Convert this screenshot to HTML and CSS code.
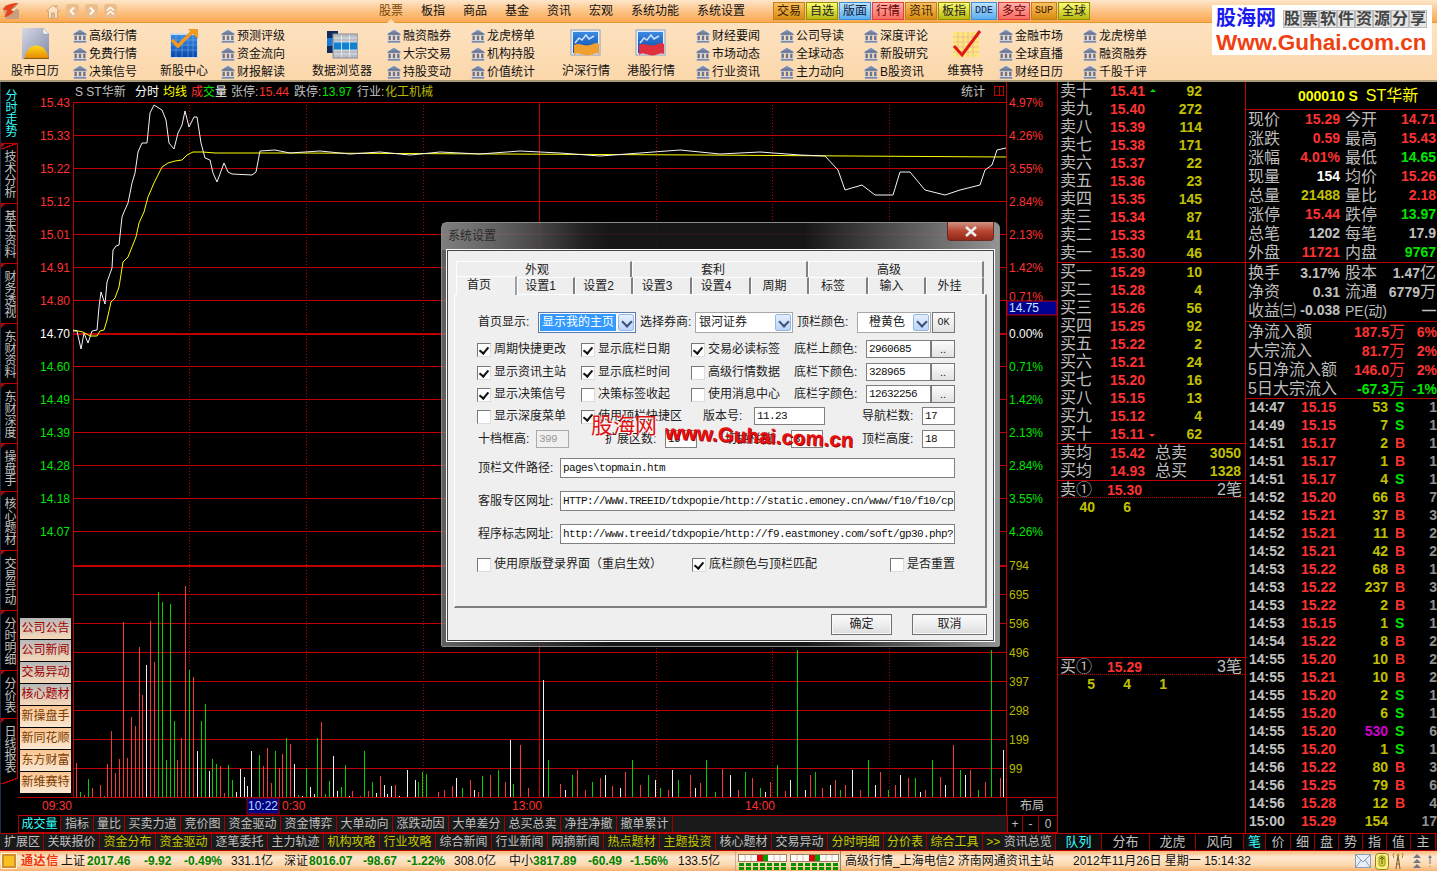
FILE: index.html
```html
<!DOCTYPE html>
<html lang="zh-CN">
<head>
<meta charset="utf-8">
<title>通达信</title>
<link rel="stylesheet" href="styles.css">
</head>
<body>
<svg class="defs" width="0" height="0" aria-hidden="true">
  <defs>
    <linearGradient id="bankg" x1="0" y1="0" x2="0" y2="1"><stop offset="0" stop-color="#98a6c2"/><stop offset="1" stop-color="#5a6886"/></linearGradient>
    <linearGradient id="pageg" x1="0" y1="0" x2="1" y2="1"><stop offset="0" stop-color="#d8d8e4"/><stop offset="1" stop-color="#7f8aa8"/></linearGradient>
    <linearGradient id="sung" x1="0" y1="0" x2="0" y2="1"><stop offset="0" stop-color="#ffd820"/><stop offset="1" stop-color="#e88a00"/></linearGradient>
    <linearGradient id="blueg" x1="0" y1="0" x2="0" y2="1"><stop offset="0" stop-color="#3a8ae0"/><stop offset="1" stop-color="#0a48a8"/></linearGradient>
    <symbol id="bank" viewBox="0 0 14 14">
      <path d="M7 .2 13.8 4.800V6.200H.2V4.800Z" fill="url(#bankg)" stroke="#f4f6fc" stroke-width=".5"/>
      <path d="M1.500 6.800h2.400v4.400H1.500zM5.800 6.800h2.400v4.400H5.800zM10.100 6.800h2.400v4.400h-2.400z" fill="#66759a"/>
      <path d="M.5 11.500h13V13.800H.5z" fill="url(#bankg)" stroke="#f4f6fc" stroke-width=".4"/>
    </symbol>
    <symbol id="flag" viewBox="0 0 32 32">
      <rect x="1" y="3" width="29" height="25" fill="#e8eef8" stroke="#8ca0c0"/>
      <rect x="3" y="5" width="25" height="21" fill="url(#blueg)"/>
      <path d="M5 16 9 11 12 13 16 8 19 12 24 9" fill="none" stroke="#cfe4ff" stroke-width="1.500"/>
    </symbol>
  </defs>
</svg>

<div class="app">
  <header class="titlebar">
    <svg class="logo" width="18" height="18" viewBox="0 0 18 18"><path d="M1 6 4 3 17 1 13 6 17 8 17 17 4 17Z" fill="#c8a080"/><path d="M1 8C3 3 9 1 16 1 12 4 10 6 9 8L12 9C9 13 5 15 2 15 4 12 5 10 5 8Z" fill="#e8421a"/><path d="M9 8 15 5 12 9Z" fill="#fff2c0"/></svg>
    <svg class="home" width="14" height="15" viewBox="0 0 14 15"><path d="M7 1 .5 7H2.500V14H11.500V7H13.500L11 4.700V1.500H9.500V3.300Z" fill="#fbe3c4" stroke="#cfa57c"/><path d="M5.500 14V9H8.500V14" fill="#e4bd94" stroke="#cfa57c"/></svg>
    <span class="navbtn first"><svg width="13" height="14" viewBox="0 0 13 14"><path d="M8 3.500 4.500 7 8 10.500" fill="none" stroke="#fff" stroke-width="1.800"/></svg></span>
    <span class="navbtn"><svg width="13" height="14" viewBox="0 0 13 14"><path d="M5 3.500 8.500 7 5 10.500" fill="none" stroke="#fff" stroke-width="1.800"/></svg></span>
    <span class="navbtn"><svg width="13" height="14" viewBox="0 0 13 14"><path d="M3 6.500 6.500 3.500 10 6.500M3 10.500 6.500 7.500 10 10.500" fill="none" stroke="#fff" stroke-width="1.500"/></svg></span>
    <nav class="menu">
      <span class="cur">股票</span><span>板指</span><span>商品</span><span>基金</span><span>资讯</span><span>宏观</span><span>系统功能</span><span>系统设置</span>
    </nav>
    <div class="quick">
      <span class="qb orange">交易</span><span class="qb yellow">自选</span><span class="qb blue">版面</span><span class="qb pink">行情</span><span class="qb orange">资讯</span><span class="qb yellow">板指</span><span class="qb blue narrow mono">DDE</span><span class="qb pink">多空</span><span class="qb orange narrow mono">SUP</span><span class="qb yellow">全球</span>
    </div>
  </header>

  <section class="toolbar">
    <div class="big">
      <svg width="32" height="32" viewBox="0 0 32 32"><path d="M3 1H24L30 7V32H3Z" fill="url(#pageg)"/><path d="M24 1V7H30Z" fill="#f4f4f8" stroke="#9aa" stroke-width=".5"/><path d="M6 31A11.500 12.500 0 0 1 29 31Z" fill="url(#sung)"/><path d="M5 31H30V32H5Z" fill="#8a5a10"/></svg>
      <span>股市日历</span>
    </div>
    <div class="col">
      <div class="ti"><svg class="bk"><use href="#bank"/></svg>高级行情</div>
      <div class="ti"><svg class="bk"><use href="#bank"/></svg>免费行情</div>
      <div class="ti"><svg class="bk"><use href="#bank"/></svg>决策信号</div>
    </div>
    <div class="big">
      <svg width="32" height="32" viewBox="0 0 32 32"><rect x="2" y="6" width="28" height="25" fill="#cfd8e8"/><rect x="3" y="8" width="26" height="22" fill="url(#blueg)"/><path d="M3 13H29M3 18H29M3 23H29M8 8V30M14 8V30M20 8V30M25 8V30" stroke="#6fa8f0" stroke-width=".6"/><path d="M4 13 10 19 24 5" fill="none" stroke="#f09a20" stroke-width="3.500"/><path d="M20 2H30V12Z" fill="#f09a20"/></svg>
      <span>新股中心</span>
    </div>
    <div class="col">
      <div class="ti"><svg class="bk"><use href="#bank"/></svg>预测评级</div>
      <div class="ti"><svg class="bk"><use href="#bank"/></svg>资金流向</div>
      <div class="ti"><svg class="bk"><use href="#bank"/></svg>财报解读</div>
    </div>
    <div class="big pad15">
      <svg width="32" height="32" viewBox="0 0 32 32"><rect x="1" y="4" width="11" height="22" fill="#102a60"/><rect x="1" y="11" width="11" height="8" fill="#1a78d0"/><rect x="7" y="7" width="25" height="24" fill="#b8bcc4" stroke="#8c8c90"/><rect x="8" y="15" width="23" height="8" fill="#1080d0"/><path d="M8 15H31M8 23H31M15.500 8V30M23.500 8V30M8 11H31M8 27H31" stroke="#e8ecf0" stroke-width=".8"/></svg>
      <span>数据浏览器</span>
    </div>
    <div class="col">
      <div class="ti"><svg class="bk"><use href="#bank"/></svg>融资融券</div>
      <div class="ti"><svg class="bk"><use href="#bank"/></svg>大宗交易</div>
      <div class="ti"><svg class="bk"><use href="#bank"/></svg>持股变动</div>
    </div>
    <div class="col">
      <div class="ti"><svg class="bk"><use href="#bank"/></svg>龙虎榜单</div>
      <div class="ti"><svg class="bk"><use href="#bank"/></svg>机构持股</div>
      <div class="ti"><svg class="bk"><use href="#bank"/></svg>价值统计</div>
    </div>
    <div class="big">
      <svg width="32" height="32" viewBox="0 0 32 32"><use href="#flag"/><path d="M4 18C10 15 14 20 20 18S26 15 29 17V27C24 25 20 30 14 28S6 26 4 28Z" fill="#f0a030"/></svg>
      <span>沪深行情</span>
    </div>
    <div class="big pad13">
      <svg width="32" height="32" viewBox="0 0 32 32"><use href="#flag"/><path d="M4 18C10 15 14 20 20 18S26 15 29 17V27C24 25 20 30 14 28S6 26 4 28Z" fill="#e03040"/></svg>
      <span>港股行情</span>
    </div>
    <div class="col">
      <div class="ti"><svg class="bk"><use href="#bank"/></svg>财经要闻</div>
      <div class="ti"><svg class="bk"><use href="#bank"/></svg>市场动态</div>
      <div class="ti"><svg class="bk"><use href="#bank"/></svg>行业资讯</div>
    </div>
    <div class="col">
      <div class="ti"><svg class="bk"><use href="#bank"/></svg>公司导读</div>
      <div class="ti"><svg class="bk"><use href="#bank"/></svg>全球动态</div>
      <div class="ti"><svg class="bk"><use href="#bank"/></svg>主力动向</div>
    </div>
    <div class="col">
      <div class="ti"><svg class="bk"><use href="#bank"/></svg>深度评论</div>
      <div class="ti"><svg class="bk"><use href="#bank"/></svg>新股研究</div>
      <div class="ti"><svg class="bk"><use href="#bank"/></svg>B股资讯</div>
    </div>
    <div class="big">
      <svg width="32" height="32" viewBox="0 0 32 32"><rect x="3" y="5" width="26" height="25" fill="#fbe878"/><path d="M3 10H29M3 15H29M3 20H29M3 25H29M8 5V30M13 5V30M18 5V30M23 5V30" stroke="#f0a8a0" stroke-width=".7"/><path d="M4 19 12 28 30 4" fill="none" stroke="#e01818" stroke-width="3"/></svg>
      <span>维赛特</span>
    </div>
    <div class="col">
      <div class="ti"><svg class="bk"><use href="#bank"/></svg>金融市场</div>
      <div class="ti"><svg class="bk"><use href="#bank"/></svg>全球直播</div>
      <div class="ti"><svg class="bk"><use href="#bank"/></svg>财经日历</div>
    </div>
    <div class="col">
      <div class="ti"><svg class="bk"><use href="#bank"/></svg>龙虎榜单</div>
      <div class="ti"><svg class="bk"><use href="#bank"/></svg>融资融券</div>
      <div class="ti"><svg class="bk"><use href="#bank"/></svg>千股千评</div>
    </div>
  </section>

  <main class="main">
    <aside class="sidetabs">
      <div class="st active h61">分时走势</div>
      <div class="st h60">技术分析</div>
      <div class="st h60">基本资料</div>
      <div class="st h60">财务透视</div>
      <div class="st h60">东财资料</div>
      <div class="st h60">东财深度</div>
      <div class="st h48">操盘手</div>
      <div class="st h59">核心题材</div>
      <div class="st h60">交易异动</div>
      <div class="st h60">分时明细</div>
      <div class="st h48">分价表</div>
      <div class="st h60 last">日线报表</div>
    </aside>

    <div class="chartcol">
      <svg class="chart" viewBox="18 82 1039 733" width="1039" height="733">
        <g class="grid">
          <path d="M73 102.500H1007M73 135.500H1007M73 168.500H1007M73 201.500H1007M73 234.500H1007M73 267.500H1007M73 300.500H1007M73 366.500H1007M73 399.500H1007M73 432.500H1007M73 465.500H1007M73 498.500H1007M73 531.500H1007M73 594.500H1007M73 623.500H1007M73 652.500H1007M73 681.500H1007M73 710.500H1007M73 739.500H1007M73 768.500H1007M18 797.500H1057"/>
          <path class="thick" d="M73 334H1007M73 566H1007"/>
          <path class="dot" d="M189.500 102V797M306.500 102V797M423.500 102V797M656.500 102V797M772.500 102V797M889.500 102V797"/>
          <path d="M73.500 102V797M539.500 102V797M1006.500 82V815M1007 797.500H1057"/>
        </g>
        <path class="vr" d="M76 763V797M84 795V797M92 788V797M100 785V797M107 764V797M111 731V797M115 773V797M119 759V797M123 622V797M127 758V797M131 717V797M135 726V797M139 647V797M142 695V797M150 621V797M154 662V797M177 760V797M181 738V797M185 586V797M193 677V797M220 766V797M224 793V797M263 766V797M267 748V797M271 783V797M279 768V797M282 754V797M290 744V797M321 722V797M352 791V797M360 796V797M368 791V797M380 776V797M395 785V797M438 792V797M444 790V797M452 786V797M470 780V797M478 792V797M490 775V797M505 782V797M520 745V797M528 788V797M560 784V797M577 770V797M585 790V797M600 778V797M612 786V797M625 772V797M640 785V797M668 790V797M690 775V797M700 783V797M722 769V797M738 790V797M752 778V797M770 782V797M785 791V797M810 775V797M822 788V797M835 780V797M845 785V797M860 790V797M880 772V797M895 785V797M908 778V797M925 790V797M940 777V797M953 745V797M970 770V797M985 782V797M1000 778V797"/>
        <path class="vg" d="M80 792V797M88 779V797M104 796V797M158 592V797M162 602V797M166 760V797M170 604V797M174 721V797M189 670V797M201 721V797M205 704V797M212 759V797M216 764V797M228 765V797M232 780V797M259 755V797M275 751V797M286 738V797M298 795V797M306 768V797M317 738V797M325 794V797M329 781V797M341 787V797M345 765V797M364 751V797M372 782V797M418 782V797M422 772V797M426 774V797M462 788V797M482 776V797M498 770V797M513 784V797M548 760V797M572 775V797M592 782V797M632 760V797M648 775V797M660 788V797M678 780V797M706 760V797M715 792V797M745 772V797M760 788V797M777 765V797M797 650V797M815 772V797M840 790V797M868 760V797M888 790V797M915 778V797M932 760V797M960 770V797M978 790V797M991 650V797"/>
        <path class="vw" d="M146 665V797M197 751V797M209 771V797M236 792V797M240 769V797M244 777V797M247 786V797M251 751V797M294 764V797M302 796V797M310 787V797M314 794V797M333 756V797M337 791V797M349 796V797M376 793V797M384 785V797M387 794V797M391 786V797M399 796V797M407 770V797M415 780V797M456 778V797M474 790V797M510 740V797M543 680V797M565 790V797M605 775V797M620 788V797M655 780V797M672 770V797M695 788V797M730 775V797M765 792V797M790 780V797M805 790V797M830 785V797M852 770V797M875 785V797M900 775V797M920 792V797M945 785V797M965 775V797M1003 750V797"/>
        <polyline class="avg" points="73,330 83,332 90,336 97,336 100,331 104,330 107,320 111,302 115,298 119,287 123,262 128,257 132,247 136,237 139,223 144,212 148,197 154,183 162,167 168,163 175,161 182,160 187,155 193,152 203,152 215,153 300,153 500,154 700,155 850,156 1006,157"/>
        <polyline class="price" points="73,331 77,331 81,349 84,333 88,343 92,331 97,330 99,307 101,292 105,304 107,282 112,268 113,250 116,246 119,245 122,217 124,212 128,203 132,183 135,173 138,152 142,143 147,143 150,113 154,105 162,110 166,120 169,143 174,149 178,133 182,125 185,111 189,127 194,117 197,117 201,143 205,158 210,160 213,173 217,182 224,163 228,172 232,174 252,175 256,172 260,151 275,150 290,153 320,151 350,154 380,152 410,155 440,152 480,154 520,151 560,153 600,156 640,153 680,150 720,154 760,152 800,155 825,156 838,170 845,190 862,185 875,195 893,195 900,172 910,172 925,190 945,195 960,190 980,185 985,170 992,165 997,150 1006,148"/>

        <g class="tx">
          <text x="75" y="96" class="gray">S ST华新</text>
          <text x="135" y="96" class="white">分时</text>
          <text x="163" y="96" class="yel">均线</text>
          <text x="191" y="96" class="red">成</text><text x="203" y="96" class="grn">交</text><text x="215" y="96" class="white">量</text>
          <text x="231" y="96" class="gray">张停:</text><text x="259" y="96" class="red">15.44</text>
          <text x="294" y="96" class="gray">跌停:</text><text x="322" y="96" class="grn">13.97</text>
          <text x="357" y="96" class="gray">行业:</text><text x="385" y="96" class="oli">化工机械</text>
          <text x="961" y="96" class="gray">统计</text>

          <g class="right">
            <text x="70" y="107" class="red">15.43</text><text x="70" y="140" class="red">15.33</text><text x="70" y="173" class="red">15.22</text><text x="70" y="206" class="red">15.12</text><text x="70" y="239" class="red">15.01</text><text x="70" y="272" class="red">14.91</text><text x="70" y="305" class="red">14.80</text>
            <text x="70" y="338" class="white">14.70</text>
            <text x="70" y="371" class="grn">14.60</text><text x="70" y="404" class="grn">14.49</text><text x="70" y="437" class="grn">14.39</text><text x="70" y="470" class="grn">14.28</text><text x="70" y="503" class="grn">14.18</text><text x="70" y="536" class="grn">14.07</text>
          </g>
          <text x="1009" y="107" class="red">4.97%</text><text x="1009" y="140" class="red">4.26%</text><text x="1009" y="173" class="red">3.55%</text><text x="1009" y="206" class="red">2.84%</text><text x="1009" y="239" class="red">2.13%</text><text x="1009" y="272" class="red">1.42%</text><text x="1009" y="301" class="red">0.71%</text>
          <text x="1009" y="338" class="white">0.00%</text>
          <text x="1009" y="371" class="grn">0.71%</text><text x="1009" y="404" class="grn">1.42%</text><text x="1009" y="437" class="grn">2.13%</text><text x="1009" y="470" class="grn">2.84%</text><text x="1009" y="503" class="grn">3.55%</text><text x="1009" y="536" class="grn">4.26%</text>
          <text x="1009" y="570" class="oli">794</text><text x="1009" y="599" class="oli">695</text><text x="1009" y="628" class="oli">596</text><text x="1009" y="657" class="oli">496</text><text x="1009" y="686" class="oli">397</text><text x="1009" y="715" class="oli">298</text><text x="1009" y="744" class="oli">199</text><text x="1009" y="773" class="oli">99</text>

          <text x="42" y="810" class="red">09:30</text><text x="282" y="810" class="red">0:30</text><text x="512" y="810" class="red">13:00</text><text x="745" y="810" class="red">14:00</text>
          <text x="1020" y="810" class="gray">布局</text>
        </g>
        <rect class="mark" x="994.500" y="86.500" width="9" height="9"/>
        <path class="markl" d="M999 87V95"/>
        <rect class="hl" x="1007" y="301" width="50" height="14"/>
        <text x="1009" y="312" class="tx hlt">14.75</text>
        <rect class="tb" x="247" y="798" width="32" height="16"/>
        <text x="248" y="810" class="tx tbt">10:22</text>
      </svg>

      <div class="floatbtns">
        <span class="fb gr">公司公告</span><span class="fb gr">公司新闻</span><span class="fb gr">交易异动</span><span class="fb gr">核心题材</span><span class="fb pe">新操盘手</span><span class="fb pe">新同花顺</span><span class="fb pe">东方财富</span><span class="fb pe">新维赛特</span>
      </div>

      <div class="row1">
        <span class="bt w43 cy">成交量</span><span class="bt w33">指标</span><span class="bt w31">量比</span><span class="bt w56">买卖力道</span><span class="bt w44">竞价图</span><span class="bt w56">资金驱动</span><span class="bt w56">资金博弈</span><span class="bt w56">大单动向</span><span class="bt w56">涨跌动因</span><span class="bt w56">大单差分</span><span class="bt w56">总买总卖</span><span class="bt w56">净挂净撤</span><span class="bt w56">撤单累计</span>
        <span class="fill"></span>
        <span class="bt w16 lb">+</span><span class="bt w16">-</span><span class="bt w18 zero">0</span>
      </div>
    </div>

    <section class="book">
      <div class="sec">
        <div class="br"><span class="lbl">卖十</span><span class="pr">15.41<i class="up"></i></span><span class="vo">92</span></div>
        <div class="br"><span class="lbl">卖九</span><span class="pr">15.40</span><span class="vo">272</span></div>
        <div class="br"><span class="lbl">卖八</span><span class="pr">15.39</span><span class="vo">114</span></div>
        <div class="br"><span class="lbl">卖七</span><span class="pr">15.38</span><span class="vo">171</span></div>
        <div class="br"><span class="lbl">卖六</span><span class="pr">15.37</span><span class="vo">22</span></div>
        <div class="br"><span class="lbl">卖五</span><span class="pr">15.36</span><span class="vo">23</span></div>
        <div class="br"><span class="lbl">卖四</span><span class="pr">15.35</span><span class="vo">145</span></div>
        <div class="br"><span class="lbl">卖三</span><span class="pr">15.34</span><span class="vo">87</span></div>
        <div class="br"><span class="lbl">卖二</span><span class="pr">15.33</span><span class="vo">41</span></div>
        <div class="br"><span class="lbl">卖一</span><span class="pr">15.30</span><span class="vo">46</span></div>
      </div>
      <div class="sec">
        <div class="br"><span class="lbl">买一</span><span class="pr">15.29</span><span class="vo">10</span></div>
        <div class="br"><span class="lbl">买二</span><span class="pr">15.28</span><span class="vo">4</span></div>
        <div class="br"><span class="lbl">买三</span><span class="pr">15.26</span><span class="vo">56</span></div>
        <div class="br"><span class="lbl">买四</span><span class="pr">15.25</span><span class="vo">92</span></div>
        <div class="br"><span class="lbl">买五</span><span class="pr">15.22</span><span class="vo">2</span></div>
        <div class="br"><span class="lbl">买六</span><span class="pr">15.21</span><span class="vo">24</span></div>
        <div class="br"><span class="lbl">买七</span><span class="pr">15.20</span><span class="vo">16</span></div>
        <div class="br"><span class="lbl">买八</span><span class="pr">15.15</span><span class="vo">13</span></div>
        <div class="br"><span class="lbl">买九</span><span class="pr">15.12</span><span class="vo">4</span></div>
        <div class="br"><span class="lbl">买十</span><span class="pr">15.11<i class="down"></i></span><span class="vo">62</span></div>
      </div>
      <div class="sec">
        <div class="br tot"><span class="lbl">卖均</span><span class="pr">15.42</span><span class="lbl">总卖</span><span class="vo">3050</span></div>
        <div class="br tot"><span class="lbl">买均</span><span class="pr">14.93</span><span class="lbl">总买</span><span class="vo">1328</span></div>
      </div>
      <div class="queue sec">
        <div class="qh"><span class="lbl">卖①</span><span class="pr">15.30</span><span class="cnt">2笔</span></div>
        <div class="qn"><span class="vo">40</span><span class="vo">6</span></div>
      </div>
      <div class="queue">
        <div class="qh"><span class="lbl">买①</span><span class="pr">15.29</span><span class="cnt">3笔</span></div>
        <div class="qn"><span class="vo">5</span><span class="vo">4</span><span class="vo">1</span></div>
      </div>
    </section>

    <section class="quote">
      <div class="qhead sec"><b>000010 S</b>  <b class="big16">ST华新</b></div>
      <div class="sec">
        <div class="qr"><span class="lbl">现价</span><b class="r">15.29</b><i></i><span class="lbl">今开</span><b class="r">14.71</b></div>
        <div class="qr"><span class="lbl">涨跌</span><b class="r">0.59</b><i></i><span class="lbl">最高</span><b class="r">15.43</b></div>
        <div class="qr"><span class="lbl">涨幅</span><b class="r">4.01%</b><i></i><span class="lbl">最低</span><b class="g">14.65</b></div>
        <div class="qr"><span class="lbl">现量</span><b class="w">154</b><i></i><span class="lbl">均价</span><b class="r">15.26</b></div>
        <div class="qr"><span class="lbl">总量</span><b class="o">21488</b><i></i><span class="lbl">量比</span><b class="r">2.18</b></div>
        <div class="qr"><span class="lbl">涨停</span><b class="r">15.44</b><i></i><span class="lbl">跌停</span><b class="g">13.97</b></div>
        <div class="qr"><span class="lbl">总笔</span><b class="a">1202</b><i></i><span class="lbl">每笔</span><b class="a">17.9</b></div>
        <div class="qr"><span class="lbl">外盘</span><b class="r">11721</b><i></i><span class="lbl">内盘</span><b class="g">9767</b></div>
      </div>
      <div class="sec three">
        <div class="qr"><span class="lbl">换手</span><b class="a">3.17%</b><i></i><span class="lbl">股本</span><b class="a">1.47<em>亿</em></b></div>
        <div class="qr"><span class="lbl">净资</span><b class="a">0.31</b><i></i><span class="lbl">流通</span><b class="a">6779<em>万</em></b></div>
        <div class="qr"><span class="lbl">收益㈢</span><b class="a">-0.038</b><i></i><span class="lbl pelbl">PE(动)</span><b class="a">—</b></div>
      </div>
      <div class="sec">
        <div class="fr"><span class="lbl">净流入额</span><b class="r">187.5<em>万</em></b><b class="r">6%</b></div>
        <div class="fr"><span class="lbl">大宗流入</span><b class="r">81.7<em>万</em></b><b class="r">2%</b></div>
        <div class="fr"><span class="lbl">5日净流入额</span><b class="r">146.0<em>万</em></b><b class="r">2%</b></div>
        <div class="fr"><span class="lbl">5日大宗流入</span><b class="g">-67.3<em>万</em></b><b class="g">-1%</b></div>
      </div>
      <div class="ticks">
        <div class="tk"><b class="a">14:47</b><b class="r">15.15</b><b class="o">53</b><b class="g">S</b><b class="d">1</b></div>
        <div class="tk"><b class="a">14:49</b><b class="r">15.15</b><b class="o">7</b><b class="g">S</b><b class="d">1</b></div>
        <div class="tk"><b class="a">14:51</b><b class="r">15.17</b><b class="o">2</b><b class="r">B</b><b class="d">1</b></div>
        <div class="tk"><b class="a">14:51</b><b class="r">15.17</b><b class="o">1</b><b class="r">B</b><b class="d">1</b></div>
        <div class="tk"><b class="a">14:51</b><b class="r">15.17</b><b class="o">4</b><b class="g">S</b><b class="d">1</b></div>
        <div class="tk"><b class="a">14:52</b><b class="r">15.20</b><b class="o">66</b><b class="r">B</b><b class="d">7</b></div>
        <div class="tk"><b class="a">14:52</b><b class="r">15.21</b><b class="o">37</b><b class="r">B</b><b class="d">3</b></div>
        <div class="tk"><b class="a">14:52</b><b class="r">15.21</b><b class="o">11</b><b class="r">B</b><b class="d">2</b></div>
        <div class="tk"><b class="a">14:52</b><b class="r">15.21</b><b class="o">42</b><b class="r">B</b><b class="d">2</b></div>
        <div class="tk"><b class="a">14:53</b><b class="r">15.22</b><b class="o">68</b><b class="r">B</b><b class="d">1</b></div>
        <div class="tk"><b class="a">14:53</b><b class="r">15.22</b><b class="o">237</b><b class="r">B</b><b class="d">3</b></div>
        <div class="tk"><b class="a">14:53</b><b class="r">15.22</b><b class="o">2</b><b class="r">B</b><b class="d">1</b></div>
        <div class="tk"><b class="a">14:53</b><b class="r">15.15</b><b class="o">1</b><b class="g">S</b><b class="d">1</b></div>
        <div class="tk"><b class="a">14:54</b><b class="r">15.22</b><b class="o">8</b><b class="r">B</b><b class="d">2</b></div>
        <div class="tk"><b class="a">14:55</b><b class="r">15.20</b><b class="o">10</b><b class="r">B</b><b class="d">2</b></div>
        <div class="tk"><b class="a">14:55</b><b class="r">15.21</b><b class="o">10</b><b class="r">B</b><b class="d">2</b></div>
        <div class="tk"><b class="a">14:55</b><b class="r">15.20</b><b class="o">2</b><b class="g">S</b><b class="d">1</b></div>
        <div class="tk"><b class="a">14:55</b><b class="r">15.20</b><b class="o">6</b><b class="g">S</b><b class="d">1</b></div>
        <div class="tk"><b class="a">14:55</b><b class="r">15.20</b><b class="m">530</b><b class="g">S</b><b class="d">6</b></div>
        <div class="tk"><b class="a">14:55</b><b class="r">15.20</b><b class="o">1</b><b class="g">S</b><b class="d">1</b></div>
        <div class="tk"><b class="a">14:56</b><b class="r">15.22</b><b class="o">80</b><b class="r">B</b><b class="d">3</b></div>
        <div class="tk"><b class="a">14:56</b><b class="r">15.25</b><b class="o">79</b><b class="r">B</b><b class="d">6</b></div>
        <div class="tk"><b class="a">14:56</b><b class="r">15.28</b><b class="o">12</b><b class="r">B</b><b class="d">4</b></div>
        <div class="tk"><b class="a">15:00</b><b class="r">15.29</b><b class="o">154</b><b></b><b class="d">17</b></div>
      </div>
    </section>
  </main>

  <div class="row2">
    <span class="bt w43">扩展区</span><span class="bt w56">关联报价</span><span class="bt w56 ol">资金分布</span><span class="bt w56 ol">资金驱动</span><span class="bt w56">逐笔委托</span><span class="bt w56">主力轨迹</span><span class="bt w56 ol">机构攻略</span><span class="bt w56 ol">行业攻略</span><span class="bt w56">综合新闻</span><span class="bt w56">行业新闻</span><span class="bt w56">网摘新闻</span><span class="bt w56 ol">热点题材</span><span class="bt w56 ol">主题投资</span><span class="bt w56">核心题材</span><span class="bt w56">交易异动</span><span class="bt w56 ol">分时明细</span><span class="bt w43 ol">分价表</span><span class="bt w56 ol">综合工具</span><span class="bt w73"><span class="ol">&gt;&gt;</span> 资讯总览</span><span class="bt w46 big13 cy dark">队列</span><span class="bt w48 big13">分布</span><span class="bt w46 big13">龙虎</span><span class="bt w48 big13">风向</span><span class="bt w22 big13 cy dark">笔</span><span class="bt w25 big13">价</span><span class="bt w24 big13">细</span><span class="bt w24 big13">盘</span><span class="bt w24 big13">势</span><span class="bt w24 big13">指</span><span class="bt w24 big13">值</span><span class="bt w25 big13">主</span>
  </div>

  <footer class="status">
    <span class="orb"></span>
    <b class="brand">通达信</b>
    <span>上证</span><b>2017.46</b><b>-9.92</b><b>-0.49%</b><span class="amt">331.1亿</span>
    <span>深证</span><b>8016.07</b><b>-98.67</b><b>-1.22%</b><span class="amt">308.0亿</span>
    <span>中小</span><b>3817.89</b><b>-60.49</b><b>-1.56%</b><span class="amt">133.5亿</span>
    <svg class="signal" width="106" height="20" viewBox="0 0 106 20">
      <path d="M0 0V20M105.500 0V20" stroke="#8a8a8a"/>
      <g><rect x="3.500" y="3.500" width="48" height="7" fill="#fff" stroke="#a08060"/><rect x="22" y="4" width="6" height="6" fill="#e00000"/><rect x="28" y="4" width="5" height="6" fill="#00a000"/><path d="M10 4V10M16 4V10M39 4V10M45 4V10" stroke="#d8c0a0"/><path d="M4 13.500H51M4 17.500H51" stroke="#009000" stroke-width="3" stroke-dasharray="5 2"/></g>
      <g transform="translate(52 0)"><rect x="3.500" y="3.500" width="48" height="7" fill="#fff" stroke="#a08060"/><rect x="22" y="4" width="6" height="6" fill="#e00000"/><rect x="28" y="4" width="5" height="6" fill="#00a000"/><path d="M10 4V10M16 4V10M39 4V10M45 4V10" stroke="#d8c0a0"/><path d="M4 13.500H51M4 17.500H51" stroke="#009000" stroke-width="3" stroke-dasharray="5 2"/></g>
    </svg>
    <span class="server">高级行情_上海电信2 济南网通资讯主站</span>
    <span class="date">2012年11月26日 星期一 15:14:32</span>
    <svg class="trayicons" width="82" height="20" viewBox="0 0 82 20">
      <rect x=".500" y="3.500" width="15" height="13" fill="#e8eef6" stroke="#8ca0b8"/><path d="M1 4 8 11 15 4M1 16 6 9M15 16 10 9" fill="none" stroke="#8ca0b8"/>
      <rect x="20.500" y="2.500" width="13" height="16" rx="3" fill="#f8f080" stroke="#908020"/><rect x="24" y="5" width="6" height="10" rx="2" fill="#e0d040" stroke="#a09020"/><path d="M27 6V13M25 8 27 6 29 8" fill="none" stroke="#406010"/>
      <path d="M43 4 41 18M43 4 45 18M41.500 13H44.500M42 9H44" stroke="#806020" fill="none"/><circle cx="43" cy="4" r="1.500" fill="#c09020"/><path d="M39 2Q37 4 39 7M47 2Q49 4 47 7" stroke="#a08030" fill="none"/>
      <path d="M62 3 58 7H66ZM62 8 58 12H66ZM62 13 58 17H66Z" fill="#707884"/>
      <path d="M75 4 73 7H77ZM74.500 7H75.500V13H74.500ZM74.500 15H75.500V16H74.500Z" fill="#707884"/>
    </svg>
  </footer>

  <div class="logo-wm">
    <div class="wm-top"><b class="wm-cn">股海网</b><span class="wm-sub"><i>股</i><i>票</i><i>软</i><i>件</i><i>资</i><i>源</i><i>分</i><i>享</i></span></div>
    <b class="wm-url">Www.Guhai.com.cn</b>
  </div>

  <div class="dialog">
    <div class="dtitle"><span>系统设置</span><span class="close"><svg width="14" height="11" viewBox="0 0 14 11"><path d="M2 1 12 10M12 1 2 10" stroke="#eee" stroke-width="2.600"/></svg></span></div>
    <div class="client">
      <div class="tabs1"><span class="t1 w176">外观</span><span class="t1 w175">套利</span><span class="t1 w176">高级</span></div>
      <div class="tabs2">
        <span class="t2 sel">首页</span><span class="t2 w58">设置1</span><span class="t2 w58">设置2</span><span class="t2 w59">设置3</span><span class="t2 w59">设置4</span><span class="t2 w58">周期</span><span class="t2 w59">标签</span><span class="t2 w58">输入</span><span class="t2 w58">外挂</span>
      </div>
      <div class="page">
        <div class="r0">
          <label>首页显示:</label>
          <span class="combo focus"><span class="cv sel-text">显示我的主页</span><i class="arr"></i></span>
          <label>选择券商:</label>
          <span class="combo"><span class="cv">银河证券</span><i class="arr"></i></span>
          <label>顶栏颜色:</label>
          <span class="combo c74"><span class="cv ctr">橙黄色</span><i class="arr"></i></span>
          <span class="mini mono">OK</span>
        </div>
        <div class="rc m7">
          <span class="ck on">周期快捷更改</span><span class="ck on">显示底栏日期</span><span class="ck on">交易必读标签</span>
          <label>底栏上颜色:</label><span class="inp">2960685</span><span class="mini">..</span>
        </div>
        <div class="rc m5">
          <span class="ck on">显示资讯主站</span><span class="ck on">显示底栏时间</span><span class="ck">高级行情数据</span>
          <label>底栏下颜色:</label><span class="inp">328965</span><span class="mini">..</span>
        </div>
        <div class="rc m4">
          <span class="ck on">显示决策信号</span><span class="ck">决策标签收起</span><span class="ck">使用消息中心</span>
          <label>底栏字颜色:</label><span class="inp">12632256</span><span class="mini">..</span>
        </div>
        <div class="rv m4">
          <span class="ck">显示深度菜单</span><span class="ck on">使用顶栏快捷区</span>
          <label>版本号:</label><span class="inp">11.23</span><label class="c6">导航栏数:</label><span class="inp">17</span>
        </div>
        <div class="rn m5">
          <label>十档框高:</label><span class="inp off">399</span><label class="c4">扩展区数:</label><span class="inp">16</span><label class="c7">切换栏数:</label><span class="inp">8</span><label class="c10">顶栏高度:</label><span class="inp">18</span>
        </div>
        <div class="rp m10"><label>顶栏文件路径:</label><span class="inp">pages\topmain.htm</span></div>
        <div class="rp m13"><label>客服专区网址:</label><span class="inp">HTTP://WWW.TREEID/tdxpopie/http://static.emoney.cn/www/f10/f10/cp</span></div>
        <div class="rp m13"><label>程序标志网址:</label><span class="inp">http://www.treeid/tdxpopie/http://f9.eastmoney.com/soft/gp30.php?</span></div>
        <div class="rb m11">
          <span class="ck wide">使用原版登录界面（重启生效）</span><span class="ck on wide">底栏颜色与顶栏匹配</span><span class="ck wide">是否重置</span>
        </div>
      </div>
      <div class="actions"><span class="wbtn w61">确定</span><span class="wbtn w75">取消</span></div>
    </div>
  </div>

  <div class="dlg-wm"><b class="dw1">股海网</b><b class="dw2">www.Guhai.com.cn</b></div>
</div>
</body>
</html>
```

FILE: styles.css
```css
* { box-sizing: border-box; margin: 0; padding: 0; }
html, body { background: #000; }
body { font: 12px/1.2 "Liberation Sans", "Noto Sans CJK SC", sans-serif; }
.defs { position: absolute; }
i, em { font-style: normal; }

.app { position: relative; width: 1437px; height: 871px; overflow: hidden; background: #000; display: flex; flex-direction: column; font-family: "Liberation Sans", "Noto Sans CJK SC", sans-serif; }

/* title bar */
.titlebar { height: 23px; flex: none; display: flex; align-items: center; background: linear-gradient(#fee6ca, #fcc488 50%, #f9a850); border-bottom: 1px solid #e89830; color: #111; }
.logo { margin-left: 2px; flex: none; }
.home { margin-left: 26px; flex: none; }
.navbtn { width: 13px; height: 14px; margin-left: 6px; background: #ecbd8c; border-radius: 3px; flex: none; display: block; }
.navbtn svg { display: block; }
.menu { margin-left: 262px; display: flex; gap: 18px; flex: none; position: relative; line-height: 22px; }
.menu .cur { color: #7a4600; position: relative; }
.menu .cur::after { content: ""; position: absolute; left: 8px; bottom: -1px; border: 4px solid transparent; border-top: 0; border-bottom-color: #fde0ba; }
.quick { margin-left: 28px; display: flex; gap: 1px; flex: none; }
.qb { width: 32px; height: 18px; line-height: 17px; text-align: center; border: 1px solid #a08030; }
.qb.narrow { width: 26px; }
.qb.mono { font: 10px/16px "Liberation Mono", monospace; }
.qb.orange { background: linear-gradient(#fbc060, #d88c10); border-color: #c08020; color: #3a1c00; }
.qb.yellow { background: linear-gradient(#fdfd70, #b8b810); border-color: #909000; color: #222; }
.qb.blue { background: linear-gradient(#bde2ff, #58aef0); border-color: #3a90e0; color: #102040; }
.qb.pink { background: linear-gradient(#ffb0a8, #f86a60); border-color: #e04040; color: #6a0000; }

/* toolbar */
.toolbar { height: 59px; flex: none; display: grid; grid-template-columns: 73px 74px 74px 91px 75px 84px 82px 66px 77px 84px 84px 68px 67px 84px 1fr; background: linear-gradient(#fde2c0, #fbd7aa); border-bottom: 2px solid #a89878; color: #111; }
.big { display: flex; flex-direction: column; align-items: center; padding-top: 4px; line-height: 18px; }
.big svg { display: block; flex: none; margin-bottom: 3px; }
.big:first-child { padding-right: 3px; }
.pad15 { padding-right: 15px; }
.pad13 { padding-right: 13px; }
.col { padding-top: 4px; margin-left: -1px; }
.ti { display: flex; align-items: center; gap: 2px; height: 18px; white-space: nowrap; }
.ti:last-child { margin-top: 0; }
.bk { width: 14px; height: 14px; flex: none; margin-left: 1px; }

/* main */
.main { height: 751px; flex: none; display: flex; }
.sidetabs { width: 18px; flex: none; border-left: 1px solid #1b2f4a; display: flex; flex-direction: column; }
.st { position: relative; writing-mode: vertical-rl; text-orientation: upright; width: 17px; color: #c0c0c0; font-size: 12px; line-height: 16px; text-align: center; border-right: 1px solid #c00000; border-top: 1px solid #c00000; }
.st::before { content: ""; position: absolute; left: 0; top: 0; border-left: 4px solid #c00000; border-bottom: 4px solid transparent; }
.st.active { color: #3ff; border-right: 0; border-top: 0; }
.st.active::before { display: none; }
.st.active::after, .st.last::after { content: ""; position: absolute; left: 0; top: 100%; width: 17px; height: 6px; background: linear-gradient(to top right, transparent 44%, #c00000 46%, #c00000 56%, transparent 58%); transform: scaleY(-1); }
.h61 { height: 61px; } .h60 { height: 60px; } .h59 { height: 59px; } .h48 { height: 48px; }

.chartcol { position: relative; width: 1039px; flex: none; display: flex; flex-direction: column; }
.chart { display: block; flex: none; }
.grid path { fill: none; stroke: #c00000; stroke-width: 1; shape-rendering: crispEdges; }
.grid .thick { stroke-width: 2; }
.grid .dot { stroke-dasharray: 1 2; }
.vr, .vg, .vw { fill: none; stroke-width: 1; shape-rendering: crispEdges; }
.vr { stroke: #f23c3c; } .vg { stroke: #00d000; } .vw { stroke: #f0f0f0; }
.avg { fill: none; stroke: #ffff00; stroke-width: 1; }
.price { fill: none; stroke: #f4f4f4; stroke-width: 1; }
.tx { font: 12px "Liberation Sans", "Noto Sans CJK SC", sans-serif; }
.tx .right { text-anchor: end; }
.gray { fill: #c0c0c0; } .white { fill: #fff; } .yel { fill: #ff0; } .red { fill: #ff3232; } .grn { fill: #00e600; } .oli { fill: #b8b800; }
.mark { fill: none; stroke: #c00000; shape-rendering: crispEdges; }
.markl { stroke: #c00000; shape-rendering: crispEdges; }
.hl { fill: #000090; stroke: #c00000; }
.hlt { fill: #c8e8ff; }
.tb { fill: #000080; stroke: #9a0000; }
.tbt { fill: #b8d8ff; }

.floatbtns { position: absolute; left: 2px; top: 536px; display: flex; flex-direction: column; gap: 1px; }
.fb { width: 51px; height: 21px; line-height: 21px; text-align: center; font-size: 12px; white-space: nowrap; }
.fb.gr { background: linear-gradient(#b8b8b8, #f6d8ba); color: #a00000; }
.fb.pe { background: linear-gradient(#fac692, #f9e6d2); color: #7a3c00; }

.row1 { height: 18px; flex: none; display: flex; background: #1a1a1a; border-top: 1px solid #c00000; border-bottom: 1px solid #c00000; }
.row1 .fill { flex: 1; }
.bt { flex: none; text-align: center; color: #c0c0c0; font-size: 12px; line-height: 16px; border-right: 1px solid #a00000; white-space: nowrap; overflow: hidden; }
.row1 .bt:first-child { border-left: 1px solid #a00000; background: #000; }
.bt.lb { border-left: 1px solid #c00000; background: #000; }
.w16, .w18 { background: #000; }
.zero { border-right: 0; }
.w16 { width: 16px; } .w18 { width: 18px; }
.w22 { width: 22px; } .w24 { width: 24px; } .w25 { width: 25px; } .w31 { width: 31px; } .w33 { width: 33px; } .w43 { width: 43px; } .w44 { width: 44px; } .w46 { width: 46px; } .w48 { width: 48px; } .w56 { width: 56px; } .w73 { width: 73px; }
.cy { color: #3ff; }
.ol { color: #c8c800; }
.dark { background: #000; }
.big13 { font-size: 13px; background: #000; }
.big13.dark { background: #0d0d0d; }

/* book */
.book { width: 188px; flex: none; border-left: 1px solid #c00000; color: #c0c0c0; }
.sec { border-bottom: 1px solid #c00000; }
.br { display: grid; grid-template-columns: 52px 50px 42px; height: 18px; align-items: center; white-space: nowrap; }
.lbl { font-size: 16px; line-height: 18px; color: #bdbdbd; padding-left: 2px; white-space: nowrap; }
.pr { font: bold 14px/18px "Liberation Sans", sans-serif; color: #ff3232; position: relative; }
.vo { font: bold 14px/18px "Liberation Sans", sans-serif; color: #c0c000; text-align: right; }
.br.tot { grid-template-columns: 52px 45px 40px 46px; }
.br.tot .lbl:nth-child(3) { padding-left: 0; }
.up { display: inline-block; margin: 0 0 4px 5px; border: 3px solid transparent; border-top: 0; border-bottom: 3px solid #00e000; vertical-align: middle; }
.down { display: inline-block; margin: 0 0 0 5px; border: 3px solid transparent; border-bottom: 0; border-top: 3px solid #ff3232; vertical-align: middle; }
.queue { height: 177px; }
.qh { display: grid; grid-template-columns: 49px 60px 75px; height: 17px; border-bottom: 1px dotted #c00000; align-items: center; white-space: nowrap; }
.cnt { text-align: right; font-size: 16px; line-height: 18px; color: #bdbdbd; }
.qn { display: grid; grid-template-columns: 37px 36px 36px; }

/* quote */
.quote { width: 192px; flex: none; border-left: 1px solid #c00000; color: #c0c0c0; overflow: hidden; }
.qhead { height: 28px; line-height: 27px; padding-left: 52px; color: #ff0; font-size: 14px; white-space: pre; }
.big16 { font-size: 16px; font-weight: 400; }
.qr { display: grid; grid-template-columns: 49px 45px 5px 42px 49px; height: 19px; align-items: center; white-space: nowrap; }
.qr b, .fr b { font: bold 14px/19px "Liberation Sans", "Noto Sans CJK SC", sans-serif; text-align: right; }
.qr .lbl:nth-of-type(2) { padding-left: 0; }
.qr em, .fr em { font-size: 16px; font-weight: 400; }
.three { height: 59px; }
.qr .pelbl { font-size: 14px; }
.fr { display: grid; grid-template-columns: 114px 45px 32px; height: 19px; align-items: center; white-space: nowrap; }
.fr b:first-of-type { margin-left: -40px; }
.r { color: #ff3232; } .g { color: #00e600; } .w { color: #fff; } .o { color: #c0c000; } .a { color: #c0c0c0; } .m { color: #d000d0; } .d { color: #909090; }
.ticks { display: flex; flex-direction: column; margin-top: -1px; }
.tk { display: grid; grid-template-columns: 55px 52px 35px 8px 1fr; height: 18px; align-items: center; white-space: nowrap; }
.tk b { font: bold 14px/17px "Liberation Sans", sans-serif; }
.tk b:nth-child(1) { padding-left: 3px; }
.tk b:nth-child(3) { text-align: right; }
.tk b:nth-child(4) { padding-left: 7px; }
.tk b:nth-child(5) { text-align: right; }

/* row 2 */
.row2 { height: 18px; flex: none; display: flex; background: #1a1a1a; padding-left: 1px; border-top: 1px solid #c00000; border-bottom: 1px solid #c00000; }

/* status */
.status { height: 20px; flex: none; display: grid; grid-template-columns: 21px 40px 26px 57px 40px 47px 53px 25px 54px 44px 47px 55px 24px 55px 42px 48px 57px 110px 228px 282px 1fr; align-items: center; background: linear-gradient(#f9b878, #fde8d0 30%, #fcd8ae 70%, #f8b070); color: #111; white-space: nowrap; line-height: 20px; }
.status b { color: #008000; font-size: 12px; }
.status .brand { color: #f03810; font-size: 12px; letter-spacing: .6px; }
.orb { width: 14px; height: 14px; margin-left: 2px; background: #f8c020; border: 2px solid #d09030; outline: 1px solid #fff3d0; }
.amt { font-size: 12px; }
.signal { display: block; }
.server, .date { font-size: 12px; }
.trayicons { display: block; }

/* top watermark */
.logo-wm { position: absolute; left: 1212px; top: 5px; width: 220px; height: 50px; background: #fff; padding: 0 2px 0 4px; overflow: hidden; }
.wm-top { display: flex; align-items: center; height: 27px; }
.wm-cn { color: #1a1af0; font-size: 20px; line-height: 27px; width: 67px; flex: none; }
.wm-sub { display: flex; }
.wm-sub i { width: 18px; height: 18px; line-height: 18px; font-size: 16px; font-weight: 700; text-align: center; color: #444; background: #e4e4e4; outline: 1px solid #bbb; outline-offset: -1px; }
.wm-url { display: block; color: #f04010; font-size: 22.500px; line-height: 23px; margin-top: -1px; white-space: nowrap; }

/* dialog */
.dialog { position: absolute; left: 441px; top: 222px; width: 559px; height: 425px; border: 1px solid #8a8a8a; border-radius: 6px 6px 2px 2px; background: linear-gradient(90deg, rgba(120,120,120,.8), rgba(25,25,25,.88) 30%, rgba(25,25,25,.88) 65%, rgba(160,160,160,.92)); display: flex; flex-direction: column; }
.dtitle { height: 27px; flex: none; display: flex; justify-content: space-between; padding-left: 6px; line-height: 27px; color: #2a2a2a; background: linear-gradient(90deg, rgba(150,150,150,.55), rgba(150,150,150,0) 25%); }
.close { width: 47px; height: 19px; margin-top: -1px; margin-right: 5px; background: linear-gradient(#cf9484, #b84632 50%, #92281a); border: 1px solid #6a2a20; border-top: 0; border-radius: 0 0 4px 4px; display: flex; align-items: center; justify-content: center; }
.client { margin: 0 5px 5px; height: 391px; background: #efefef; padding: 10px 0 0 7px; outline: 1px solid #fff; border: 1px solid #444; color: #222; }
.tabs1, .tabs2 { display: flex; margin-left: 1px; }
.tabs1 { height: 16px; }
.tabs2 { height: 17px; }
.t1, .t2 { text-align: center; border-top: 1px solid #fff; border-left: 1px solid #fff; border-right: 2px solid #808080; background: #eee; line-height: 16px; }
.t1 { padding-right: 13px; }
.t2 { padding-right: 10px; }
.w176 { width: 176px; } .w175 { width: 176px; }
.w58 { width: 58px; } .w59 { width: 59px; }
.t2.sel { width: 61px; margin-top: -1px; height: 19px; background: #f0f0f0; border-right: 2px solid #a0a0a0; position: relative; z-index: 1; padding-right: 14px; }
.page { width: 533px; height: 314px; margin-left: -1px; background: #efefef; border-top: 1px solid #fff; border-left: 1px solid #fff; border-right: 2px solid #808080; border-bottom: 2px solid #808080; padding: 16px 0 0 22px; }
.page > div { width: 478px; height: 18px; display: grid; align-items: center; white-space: nowrap; }
label { white-space: nowrap; }
.r0 { grid-template-columns: 61px 102px 55px 102px 60px 75px 23px; height: 22px !important; }
.r0 label:first-child, .rn label:first-child, .rp label { padding-left: 1px; }
.rc { grid-template-columns: 104px 110px 103px 72px 65px 24px; }
.rv { grid-template-columns: 104px 122px 51px 71px 37px 60px 33px; }
.rn { grid-template-columns: 59px 33px 36px 60px 32px 28px 66px 32px 39px 60px 33px; }
.c4 { grid-column: 4; } .c6 { grid-column: 6; } .c7 { grid-column: 7; } .c10 { grid-column: 10; }
.rp { grid-template-columns: 83px 395px; height: 20px !important; }
.rb { grid-template-columns: 215px 198px 65px; }
.m4 { margin-top: 4px; } .m5 { margin-top: 5px; } .m7 { margin-top: 7px; } .m10 { margin-top: 10px; } .m11 { margin-top: 11px; } .m13 { margin-top: 13px; }
.ck { position: relative; padding-left: 17px; line-height: 18px; white-space: nowrap; }
.ck::before { content: ""; position: absolute; left: 0; top: 3px; width: 12px; height: 12px; background: #fff; border: 1px solid #777; border-right-color: #ddd; border-bottom-color: #ddd; }
.ck.on::after { content: ""; position: absolute; left: 4px; top: 5px; width: 4px; height: 7px; border-right: 2px solid #111; border-bottom: 2px solid #111; transform: rotate(40deg); }
.inp { display: block; height: 18px; background: #fff; border: 1px solid #808080; font: 11px/16px "Liberation Mono", monospace; letter-spacing: -.6px; padding-left: 2px; overflow: hidden; white-space: nowrap; color: #111; }
.rp .inp { height: 20px; line-height: 18px; }
.inp.off { background: #f0f0f0; color: #999; border-color: #aaa; }
.mini { display: block; height: 18px; background: linear-gradient(#fbfbfb, #e2e2e2); border: 1px solid #777; text-align: center; line-height: 16px; font-size: 11px; }
.mini.mono { font: 10px/19px "Liberation Mono", monospace; height: 21px; }
.combo { display: flex; align-items: center; height: 21px; background: #fff; border: 1px solid #a8a8a8; padding: 1px; width: 98px; }
.combo.focus { border-color: #5a7ab0; }
.combo.c74 { width: 74px; }
.cv { flex: 1; line-height: 17px; padding-left: 2px; overflow: hidden; white-space: nowrap; }
.sel-text { background: #3399ff; color: #fff; margin-right: 2px; }
.ctr { text-align: center; }
.arr { position: relative; width: 16px; height: 17px; flex: none; background: linear-gradient(#e4efff, #bcd4f8); border: 1px solid #98b8e4; border-radius: 2px; }
.arr::after { content: ""; position: absolute; left: 4px; top: 3px; width: 6px; height: 6px; border-right: 2px solid #3a5078; border-bottom: 2px solid #3a5078; transform: rotate(45deg); }
.actions { display: flex; justify-content: flex-end; gap: 20px; margin: 6px 0 0; width: 532px; }
.wbtn { height: 21px; line-height: 19px; text-align: center; background: linear-gradient(#fafafa, #f0f0f0 45%, #dcdcdc); border: 1px solid #707070; box-shadow: inset 0 0 0 1px #f8f8f8; }
.w61 { width: 61px; } .w75 { width: 75px; }

.dlg-wm { position: absolute; left: 591px; top: 414px; width: 270px; height: 40px; pointer-events: none; }
.dw1 { position: absolute; left: 0; top: -2px; font-size: 22px; line-height: 28px; color: #e01010; text-shadow: 1px 1px 0 #fff; font-weight: 400; }
.dw2 { position: absolute; left: 74px; top: 10px; font-size: 20.500px; line-height: 24px; color: #e81010; white-space: nowrap; transform: rotate(2.5deg); text-shadow: 1px 1px 0 #900; }
```
